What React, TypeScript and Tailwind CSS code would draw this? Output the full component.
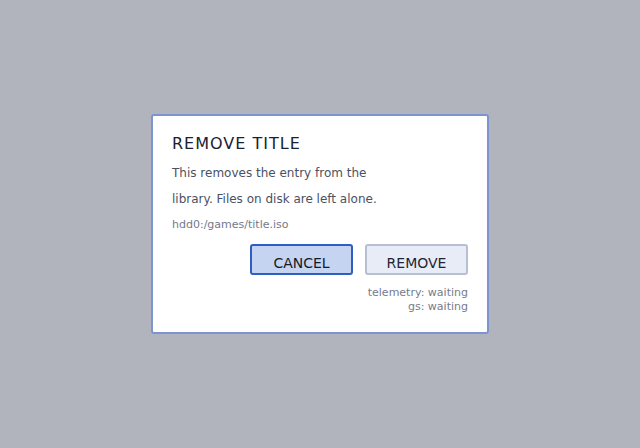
export default function App() {
  return (
    <div
      className="flex h-[448px] w-[640px] items-center justify-center bg-[#b1b4bd]"
      style={{ fontFamily: '"DejaVu Sans", "Liberation Sans", sans-serif' }}
    >
      <div className="flex w-[338px] flex-col rounded-[3px] border-2 border-[#7d94d1] bg-white px-[19px] pb-[18px] pt-[18px]">
        <h1 className="text-[16px] leading-[20px] tracking-[1px] text-[#1b2130]">REMOVE TITLE</h1>
        <p className="mt-[6px] max-w-[220px] text-[12px] leading-[26px] text-[#4a5163]">
          This removes the entry from the library. Files on disk are left alone.
        </p>
        <div className="mt-[6px] text-[11px] leading-[14px] text-[#737a8c]">hdd0:/games/title.iso</div>
        <div className="mt-[12px] flex justify-end gap-3">
          <button className="h-[31px] w-[103px] rounded-[3px] border-2 border-[#2e5ec3] bg-[#c5d5f1] pt-[7px] text-[14px] leading-[16px] text-[#141a26]">
            CANCEL
          </button>
          <button className="h-[31px] w-[103px] rounded-[3px] border-2 border-[#b8bfd0] bg-[#e8ecf6] pt-[7px] text-[14px] leading-[16px] text-[#1e2535]">
            REMOVE
          </button>
        </div>
        <div className="mt-[11px] text-right text-[11px] leading-[14px] text-[#767c8c]">
          <div>telemetry: waiting</div>
          <div>gs: waiting</div>
        </div>
      </div>
    </div>
  );
}
